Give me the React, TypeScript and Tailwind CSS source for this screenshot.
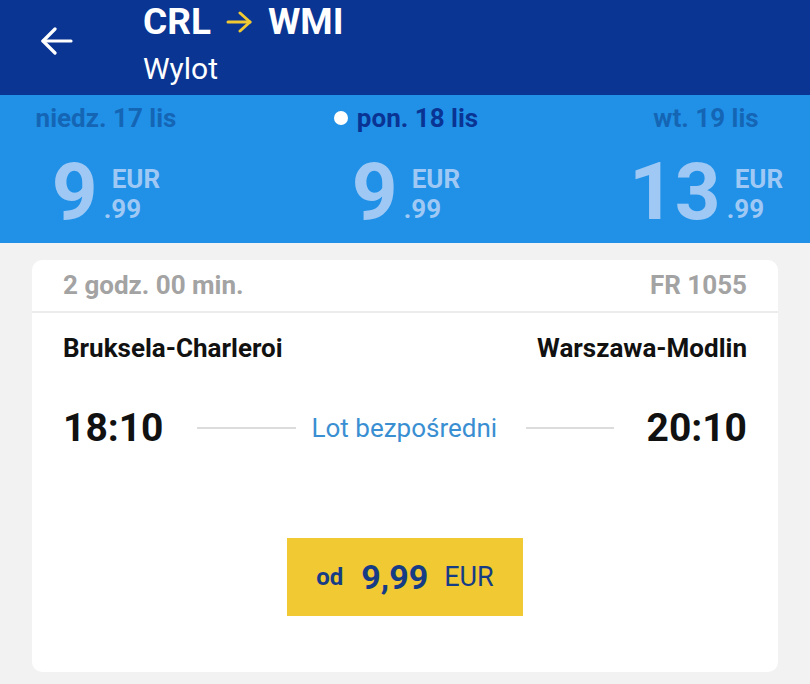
type Day = { label: string; whole: string; active?: boolean };

const days: Day[] = [
  { label: 'niedz. 17 lis', whole: '9' },
  { label: 'pon. 18 lis', whole: '9', active: true },
  { label: 'wt. 19 lis', whole: '13' },
];

function DayPrice({ day }: { day: Day }) {
  return (
    <div className="flex w-[300px] shrink-0 flex-col items-center">
      <div className="flex h-[46px] items-center gap-[9px]">
        {day.active && <span className="h-[14px] w-[14px] rounded-full bg-white" />}
        <span
          className={
            day.active
              ? 'text-[26px] font-bold text-[#0a3494]'
              : 'text-[26px] font-bold text-[#1565b5]'
          }
        >
          {day.label}
        </span>
      </div>
      <div className="mt-[11px] flex items-center gap-[14px] text-[#9fc9f4]">
        <span className="text-[80px] font-bold leading-[80px]">{day.whole}</span>
        <div className="flex flex-col pt-[4px] text-[26px] font-bold leading-[30px]">
          <span>EUR</span>
          <span className="-ml-[8px]">.99</span>
        </div>
      </div>
    </div>
  );
}

export default function App() {
  return (
    <div className="min-h-[684px] w-[810px] bg-[#f2f2f2] font-['Roboto',sans-serif]">
      <header className="flex h-[95px] items-start bg-[#0a3593] text-white">
        <div className="flex w-[143px] pl-[40px] pt-[27px]">
          <svg width="33" height="28" viewBox="0 0 33 28" fill="none" stroke="currentColor" strokeWidth="3.2" strokeLinecap="round" strokeLinejoin="round">
            <path d="M31 14H3" />
            <path d="M15 2L3 14l12 12" />
          </svg>
        </div>
        <div className="flex flex-col">
          <div className="flex h-[44px] items-center text-[37px] font-bold leading-[44px]">
            <span>CRL</span>
            <svg className="ml-[15px] mr-[16px] text-[#f1c933]" width="26" height="22" viewBox="0 0 26 22" fill="none" stroke="currentColor" strokeWidth="3" strokeLinecap="round" strokeLinejoin="round">
              <path d="M2 11h22" />
              <path d="M14 2l10 9-10 9" />
            </svg>
            <span>WMI</span>
          </div>
          <span className="mt-[7px] text-[30px] leading-[36px]">Wylot</span>
        </div>
      </header>

      <section className="h-[148px] overflow-hidden bg-[#2191e8]">
        <div className="-ml-[44px] flex">
          {days.map((d) => (
            <DayPrice key={d.label} day={d} />
          ))}
        </div>
      </section>

      <div className="px-[32px] pt-[17px] pb-[12px]">
        <div className="flex h-[412px] flex-col rounded-[10px] bg-white">
          <div className="flex h-[53px] items-center justify-between border-b-2 border-[#ececec] px-[31px] text-[26px] font-bold text-[#a3a3a3]">
            <span>2 godz. 00 min.</span>
            <span>FR 1055</span>
          </div>

          <div className="flex justify-between px-[31px] pt-[19px] text-[26px] font-bold leading-[32px] text-[#111]">
            <span>Bruksela-Charleroi</span>
            <span>Warszawa-Modlin</span>
          </div>

          <div className="mt-[41px] flex items-center px-[31px]">
            <span className="text-[39px] font-bold leading-[46px] text-[#111]">18:10</span>
            <div className="ml-[33px] h-[2px] w-[99px] bg-[#dcdcdc]" />
            <span className="ml-[16px] mr-[29px] text-[26px] text-[#3a8fd2]">Lot bezpośredni</span>
            <div className="h-[2px] flex-1 bg-[#dcdcdc]" />
            <span className="ml-[33px] text-[39px] font-bold leading-[46px] text-[#111]">20:10</span>
          </div>

          <div className="mt-[87px] flex justify-center">
            <button className="flex h-[78px] w-[236px] items-center justify-center bg-[#f1c933] text-[#163c86]">
              <span className="text-[24px] font-bold">od</span>
              <span className="ml-[18px] text-[34px] font-bold">9,99</span>
              <span className="ml-[16px] text-[27px]">EUR</span>
            </button>
          </div>
        </div>
      </div>
    </div>
  );
}
